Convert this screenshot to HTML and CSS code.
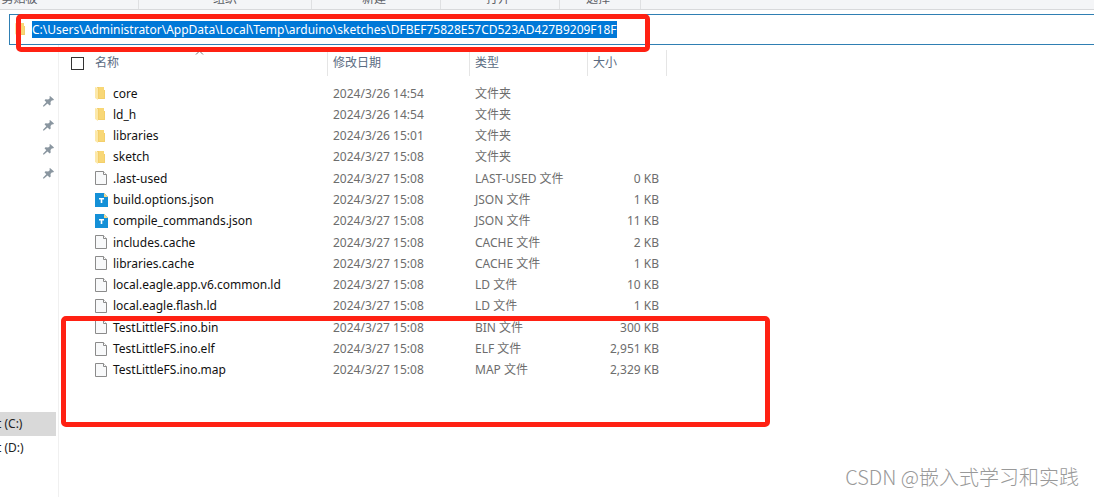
FILE: index.html
```html
<!DOCTYPE html>
<html lang="zh-CN">
<head>
<meta charset="utf-8">
<meta name="viewport" content="width=device-width, initial-scale=1">
<title>sketches</title>
<link rel="stylesheet" href="styles.css">
</head>
<body>
<svg class="defs" aria-hidden="true">
  <symbol id="folder" viewBox="0 0 13 15">
    <path d="M2 1h7v3h1v9H2z" fill="#f3cf6c"/><path d="M4 1h5v11H4z" fill="#f8d776"/><path d="M0 1l3 1v12l-3-2z" fill="#fce8a8"/>
  </symbol>
  <symbol id="page" viewBox="0 0 13 15">
    <path d="M.5.5h8l3 3v10H.5z" fill="#f8f9fa" stroke="#8b8b8b"/><path d="M8.500.5v3h3" fill="#fff" stroke="#8b8b8b"/>
  </symbol>
  <symbol id="json" viewBox="0 0 13 15">
    <path d="M0 0h9l4 4v10H0z" fill="#1490d7"/><path d="M9 0l4 4H9z" fill="#f6dc8c"/><path d="M4 5h5v1.500H7.300V10H5.700V6.500H4z" fill="#fff"/>
  </symbol>
  <symbol id="pin" viewBox="0 0 11 11">
    <path d="M7 0l4 3.500-1 1-1-.2L7.500 6l.2 2.500-1 1L4.500 7.400 1 10.500H0v-.8L3.300 6.200 1.500 4.300l1-1 2.700.2L7 2 6.300 1z" fill="#8a96a0"/>
  </symbol>
</svg>
<div class="window">
  <header class="ribbon">
    <span class="group g1">剪贴板</span><span class="group g2">组织</span><span class="group g3">新建</span><span class="group g4">打开</span><span class="group g5">选择</span>
  </header>
  <div class="address">
    <svg class="folder"><use href="#folder"/></svg>
    <input class="path" type="text" aria-label="地址" value="C:\Users\Administrator\AppData\Local\Temp\arduino\sketches\DFBEF75828E57CD523AD427B9209F18F">
  </div>
  <div class="body">
    <nav class="sidebar">
      <div class="pins">
        <svg class="pin"><use href="#pin"/></svg><svg class="pin"><use href="#pin"/></svg><svg class="pin"><use href="#pin"/></svg><svg class="pin"><use href="#pin"/></svg>
      </div>
      <a class="drive current" href="#c">t (C:)</a>
      <a class="drive" href="#d">t (D:)</a>
    </nav>
    <main class="files">
      <table class="list">
        <colgroup><col class="c-check"><col class="c-name"><col class="c-date"><col class="c-type"><col class="c-size"></colgroup>
        <thead><tr>
          <th><div class="head"><input class="check" type="checkbox" aria-label="全选"></div></th>
          <th><div class="head name-head">名称<svg class="sort" viewBox="0 0 9 5"><path d="M1 4.500L4.500 1 8 4.500" fill="none" stroke="#777"/></svg></div></th>
          <th><div class="head line">修改日期</div></th>
          <th><div class="head line">类型</div></th>
          <th><div class="head line last">大小</div></th>
        </tr></thead>
        <tbody>
          <tr><td></td><td><div class="file"><svg class="icon"><use href="#folder"/></svg>core</div></td><td>2024/3/26 14:54</td><td>文件夹</td><td></td></tr>
          <tr><td></td><td><div class="file"><svg class="icon"><use href="#folder"/></svg>ld_h</div></td><td>2024/3/26 14:54</td><td>文件夹</td><td></td></tr>
          <tr><td></td><td><div class="file"><svg class="icon"><use href="#folder"/></svg>libraries</div></td><td>2024/3/26 15:01</td><td>文件夹</td><td></td></tr>
          <tr><td></td><td><div class="file"><svg class="icon"><use href="#folder"/></svg>sketch</div></td><td>2024/3/27 15:08</td><td>文件夹</td><td></td></tr>
          <tr><td></td><td><div class="file"><svg class="icon"><use href="#page"/></svg>.last-used</div></td><td>2024/3/27 15:08</td><td>LAST-USED 文件</td><td>0 KB</td></tr>
          <tr><td></td><td><div class="file"><svg class="icon"><use href="#json"/></svg>build.options.json</div></td><td>2024/3/27 15:08</td><td>JSON 文件</td><td>1 KB</td></tr>
          <tr><td></td><td><div class="file"><svg class="icon"><use href="#json"/></svg>compile_commands.json</div></td><td>2024/3/27 15:08</td><td>JSON 文件</td><td>11 KB</td></tr>
          <tr><td></td><td><div class="file"><svg class="icon"><use href="#page"/></svg>includes.cache</div></td><td>2024/3/27 15:08</td><td>CACHE 文件</td><td>2 KB</td></tr>
          <tr><td></td><td><div class="file"><svg class="icon"><use href="#page"/></svg>libraries.cache</div></td><td>2024/3/27 15:08</td><td>CACHE 文件</td><td>1 KB</td></tr>
          <tr><td></td><td><div class="file"><svg class="icon"><use href="#page"/></svg>local.eagle.app.v6.common.ld</div></td><td>2024/3/27 15:08</td><td>LD 文件</td><td>10 KB</td></tr>
          <tr><td></td><td><div class="file"><svg class="icon"><use href="#page"/></svg>local.eagle.flash.ld</div></td><td>2024/3/27 15:08</td><td>LD 文件</td><td>1 KB</td></tr>
          <tr><td></td><td><div class="file"><svg class="icon"><use href="#page"/></svg>TestLittleFS.ino.bin</div></td><td>2024/3/27 15:08</td><td>BIN 文件</td><td>300 KB</td></tr>
          <tr><td></td><td><div class="file"><svg class="icon"><use href="#page"/></svg>TestLittleFS.ino.elf</div></td><td>2024/3/27 15:08</td><td>ELF 文件</td><td>2,951 KB</td></tr>
          <tr><td></td><td><div class="file"><svg class="icon"><use href="#page"/></svg>TestLittleFS.ino.map</div></td><td>2024/3/27 15:08</td><td>MAP 文件</td><td>2,329 KB</td></tr>
        </tbody>
      </table>
    </main>
  </div>
  <div class="mark mark-path"></div>
  <div class="mark mark-files"></div>
  <div class="watermark">CSDN @嵌入式学习和实践</div>
</div>
</body>
</html>
```
FILE: styles.css
```css
* { box-sizing: border-box; }
body {
  margin: 0;
  background: #fff;
  color: #111;
  font: 12px/16px "Noto Sans", "Noto Sans CJK SC", sans-serif;
}
.defs { position: absolute; width: 0; height: 0; }
.window {
  position: relative;
  display: flex;
  flex-direction: column;
  min-height: 100vh;
  overflow: hidden;
}
.ribbon {
  display: flex;
  align-items: flex-end;
  height: 10px;
  overflow: hidden;
  background: #f4f5f7;
  border-bottom: 1px solid #d8d9db;
  color: #5c6066;
}
.group {
  padding-bottom: 2px;
  text-align: center;
  border-right: 1px solid #dfe0e2;
}
.g1 { width: 139px; padding-right: 99px; }
.g2 { width: 173px; }
.g3 { width: 129px; padding-right: 4px; }
.g4 { width: 119px; padding-right: 4px; }
.g5 { width: 81px; padding-right: 4px; }
.address {
  display: flex;
  align-items: center;
  height: 31px;
  margin: 4px 0 0 9px;
  padding-left: 5px;
  border: 1px solid #2f7fb3;
  border-right: 0;
}
.folder { width: 13px; height: 15px; margin-right: 4px; }
.path {
  field-sizing: content;
  height: 17px;
  padding: 0;
  border: 0;
  outline: 0;
  background: #0078d7;
  color: #fff;
  font: inherit;
}
.body { display: flex; flex: 1; }
.sidebar {
  width: 58px;
  padding: 44px 2px 0 0;
}
.pins {
  display: flex;
  flex-direction: column;
  align-items: flex-end;
  gap: 13px;
  height: 323px;
  padding: 7px 2px 0 0;
}
.pin { width: 11px; height: 11px; }
.drive {
  display: block;
  height: 24px;
  overflow: hidden;
  color: #222;
  line-height: 24px;
  text-indent: -3px;
  text-decoration: none;
}
.current { background: #d9d9d9; }
.files {
  flex: 1;
  padding-top: 5px;
  border-left: 1px solid #f0f0f0;
}
.list {
  width: 608px;
  height: 331px;
  table-layout: fixed;
  border-collapse: collapse;
}
.c-check { width: 36px; }
.c-name { width: 232px; }
.c-date { width: 142px; }
.c-type { width: 118px; }
.c-size { width: 80px; }
th, td { padding: 0; text-align: left; font-weight: 400; white-space: nowrap; }
thead tr { height: 33px; }
th { vertical-align: top; color: #5a6b82; }
.head {
  display: flex;
  align-items: center;
  height: 26px;
}
.line { padding-left: 5px; border-left: 1px solid #e5e5e5; }
.last { border-right: 1px solid #e5e5e5; }
.name-head { align-items: stretch; line-height: 26px; }
.sort { width: 9px; height: 5px; margin-left: 76px; }
.check {
  appearance: none;
  width: 13px;
  height: 13px;
  margin: 0 0 0 12px;
  border: 1px solid #333;
  background: #fff;
}
td { color: #6d6d6d; }
td:nth-child(3), td:nth-child(4) { padding-left: 6px; }
td:last-child { padding-right: 8px; text-align: right; }
.file { display: flex; align-items: center; gap: 5px; color: #111; }
.icon { width: 13px; height: 15px; }
.mark {
  position: absolute;
  border: 5px solid #ff2113;
  border-radius: 5px;
  pointer-events: none;
}
.mark-path { left: 16px; top: 14px; width: 634px; height: 38px; }
.mark-files { left: 61px; top: 316px; width: 709px; height: 111px; }
.watermark {
  position: absolute;
  right: 15px;
  bottom: 8px;
  color: #999;
  font: 300 20px/24px "Noto Sans CJK SC", sans-serif;
}
```
